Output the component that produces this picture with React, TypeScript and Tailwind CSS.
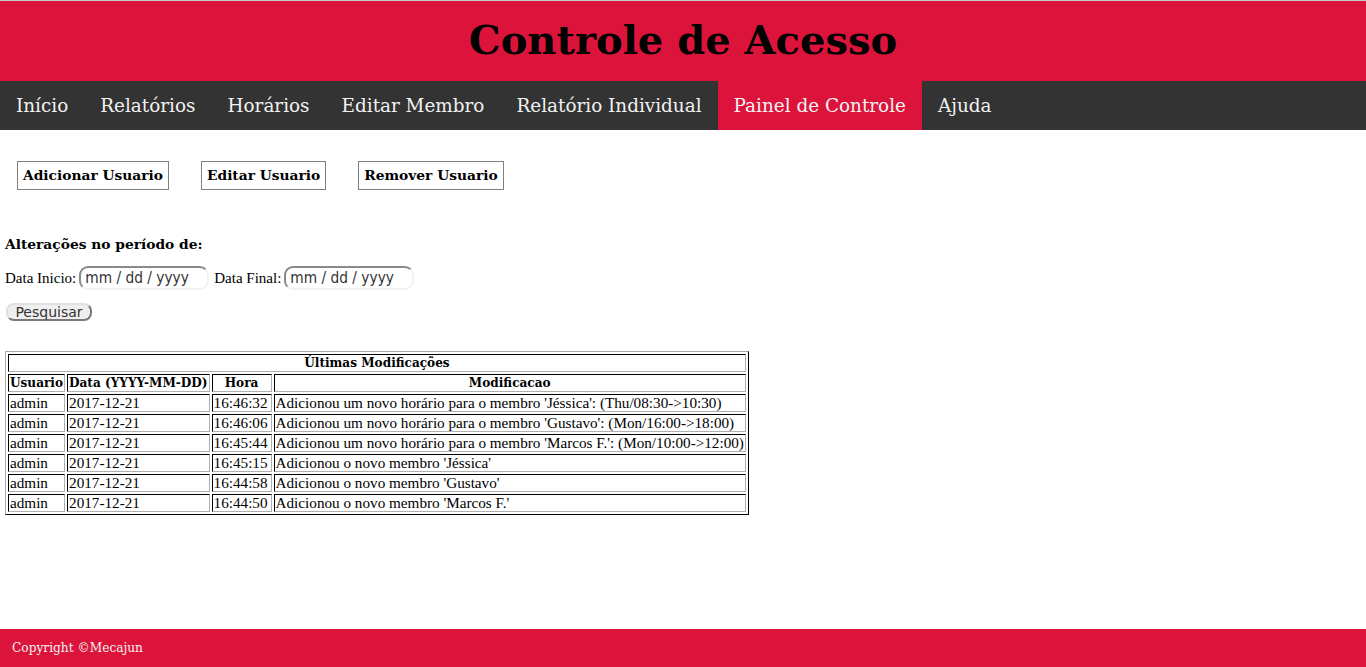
import React from "react";

const menu = [
  "Início",
  "Relatórios",
  "Horários",
  "Editar Membro",
  "Relatório Individual",
  "Painel de Controle",
  "Ajuda",
];

const logs = [
  ["admin", "2017-12-21", "16:46:32", "Adicionou um novo horário para o membro 'Jéssica': (Thu/08:30->10:30)"],
  ["admin", "2017-12-21", "16:46:06", "Adicionou um novo horário para o membro 'Gustavo': (Mon/16:00->18:00)"],
  ["admin", "2017-12-21", "16:45:44", "Adicionou um novo horário para o membro 'Marcos F.': (Mon/10:00->12:00)"],
  ["admin", "2017-12-21", "16:45:15", "Adicionou o novo membro 'Jéssica'"],
  ["admin", "2017-12-21", "16:44:58", "Adicionou o novo membro 'Gustavo'"],
  ["admin", "2017-12-21", "16:44:50", "Adicionou o novo membro 'Marcos F.'"],
];

const cell =
  "border border-t-black border-l-black border-r-[#b0b0b0] border-b-[#b0b0b0] px-px py-0 leading-[16px]";
const head = `${cell} font-bold font-['DejaVu_Serif',serif] text-[12.1px]`;

function DateBox() {
  return (
    <div className="w-[130px] h-[24px] rounded-[9px] border-2 border-t-[#8a8a8a] border-l-[#8a8a8a] border-r-[#f2f2f2] border-b-[#f2f2f2] flex items-center pl-[4px] text-[15.3px] text-[#333] font-['DejaVu_Sans_Condensed','DejaVu_Sans',sans-serif]">
      mm / dd / yyyy
    </div>
  );
}

export default function App() {
  return (
    <div className="min-h-screen flex flex-col bg-white font-['DejaVu_Serif',serif] text-black">
      {/* topo */}
      <header className="border-t border-[#c8c8c8] bg-[#dc143c] h-[81px] flex items-center justify-center">
        <h1 className="text-[40px] font-bold leading-none -mt-[2px]">Controle de Acesso</h1>
      </header>

      {/* menu */}
      <nav className="bg-[#333333] h-[49px] flex">
        {menu.map((item) => (
          <a
            key={item}
            className={`px-[16px] flex items-center text-[18.4px] text-[#f2f2f2] ${
              item === "Painel de Controle" ? "bg-[#dc143c]" : ""
            }`}
          >
            {item}
          </a>
        ))}
      </nav>

      <main className="flex flex-col">
        {/* botoes */}
        <div className="flex gap-[32px] pl-[17px] mt-[31px]">
          {["Adicionar Usuario", "Editar Usuario", "Remover Usuario"].map((b) => (
            <button
              key={b}
              className="h-[29px] px-[5px] border border-[#808080] font-bold text-[13.8px] leading-none"
            >
              {b}
            </button>
          ))}
        </div>

        {/* filtro */}
        <h4 className="pl-[5px] mt-[45px] font-bold text-[13.8px] leading-[18px]">Alterações no período de:</h4>
        <div className="pl-[5px] mt-[13px] flex items-center font-['Liberation_Serif',serif] text-[15px]">
          <span className="mr-[3px]">Data Inicio:</span>
          <DateBox />
          <span className="ml-[5px] mr-[3px]">Data Final:</span>
          <DateBox />
        </div>
        <div className="pl-[6px] mt-[10px]">
          <button className="w-[86px] h-[18px] rounded-[8px] border-2 border-t-[#e0e0e0] border-l-[#e0e0e0] border-r-[#7a7a7a] border-b-[#7a7a7a] bg-[#efefef] text-[14px] leading-none text-[#333] font-['DejaVu_Sans',sans-serif]">
            Pesquisar
          </button>
        </div>

        {/* tabela */}
        <div className="pl-[5px] mt-[27px]">
          <table className="border-separate border-spacing-[2px] border border-t-[#a8a8a8] border-l-[#a8a8a8] border-r-black border-b-black font-['Liberation_Serif',serif] text-[15.2px]">
            <thead>
              <tr>
                <th colSpan={4} className={`${head} text-center`}>
                  Últimas Modificações
                </th>
              </tr>
              <tr>
                <th className={head}>Usuario</th>
                <th className={head}>Data (YYYY-MM-DD)</th>
                <th className={`${head} w-[60px]`}>Hora</th>
                <th className={head}>Modificacao</th>
              </tr>
            </thead>
            <tbody>
              {logs.map((row, i) => (
                <tr key={i}>
                  {row.map((v, j) => (
                    <td key={j} className={`${cell} text-left`}>
                      {v}
                    </td>
                  ))}
                </tr>
              ))}
            </tbody>
          </table>
        </div>
      </main>

      {/* rodape */}
      <footer className="mt-auto bg-[#dc143c] h-[38px] flex items-center pl-[12px] text-[12.2px] text-[#f5f0f0]">
        Copyright ©Mecajun
      </footer>
    </div>
  );
}
